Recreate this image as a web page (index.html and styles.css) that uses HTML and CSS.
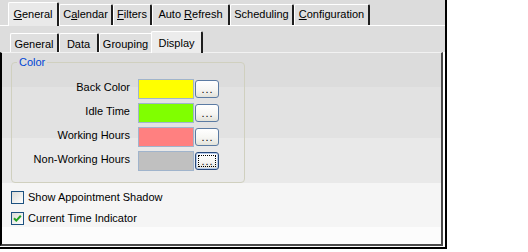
FILE: index.html
```html
<!DOCTYPE html>
<html>
<head>
<meta charset="utf-8">
<link rel="stylesheet" href="styles.css">
</head>
<body>
<div class="dialog">
  <div class="tabrow top-row">
    <div class="tab sel w-general"><u>G</u>eneral</div>
    <div class="tab w-calendar">C<u>a</u>lendar</div>
    <div class="tab w-filters"><u>F</u>ilters</div>
    <div class="tab w-auto">Auto <u>R</u>efresh</div>
    <div class="tab w-sched">Schedulin<u>g</u></div>
    <div class="tab w-config"><u>C</u>onfiguration</div>
  </div>
  <div class="page">
    <div class="tabrow sub-row">
      <div class="tab w-sgeneral">General</div>
      <div class="tab w-data">Data</div>
      <div class="tab w-grouping">Grouping</div>
      <div class="tab sel w-display">Display</div>
    </div>
    <div class="inner-wrap">
      <div class="inner">
        <fieldset class="group">
          <legend>Color</legend>
          <div class="color-grid">
            <span class="lbl">Back Color</span><span class="swatch sw-back"></span><button class="pick">...</button>
            <span class="lbl">Idle Time</span><span class="swatch sw-idle"></span><button class="pick">...</button>
            <span class="lbl">Working Hours</span><span class="swatch sw-work"></span><button class="pick">...</button>
            <span class="lbl">Non-Working Hours</span><span class="swatch sw-nonwork"></span><button class="pick focus">...</button>
          </div>
        </fieldset>
        <div class="checks">
          <label class="check"><span class="box"></span>Show Appointment Shadow</label>
          <label class="check"><span class="box"><svg width="11" height="11" viewBox="0 0 11 11"><path d="M2 5.2 L4.3 7.6 L8.8 2.8" stroke="#21a121" stroke-width="2" fill="none"/></svg></span>Current Time Indicator</label>
        </div>
      </div>
    </div>
  </div>
</div>
</body>
</html>
```

FILE: styles.css
```css
* { box-sizing: border-box; }

body {
  margin: 0;
  background: #fff;
  font: 11px/13px "Liberation Sans", Arial, sans-serif;
  color: #000;
}

.dialog {
  width: 447px;
  height: 249px;
  background: #dcdcdc;
  border-right: 2px solid #000;
  border-bottom: 2px solid #000;
  display: flex;
  flex-direction: column;
}

.tabrow {
  display: flex;
  align-items: flex-end;
  padding-left: 10px;
  flex: none;
}

.top-row { height: 25px; }

.tab {
  flex: none;
  height: 21px;
  background: #dfdfdf;
  border-top: 1px solid #fff;
  border-left: 1px solid #fff;
  border-right: 2px solid #1e1e1e;
  border-top-left-radius: 2px;
  border-top-right-radius: 2px;
  text-align: center;
  line-height: 19px;
  white-space: nowrap;
}

.tab.sel {
  position: relative;
  margin-left: -2px;
  margin-bottom: -1px;
  height: 24px;
  line-height: 23px;
  background: #e9e9e9;
}

.w-general { width: 51px; }
.w-calendar { width: 54px; }
.w-filters { width: 39px; }
.w-auto { width: 78px; }
.w-sched { width: 64px; }
.w-config { width: 76px; }

.page {
  flex: 1;
  display: flex;
  flex-direction: column;
  background: #dddddd;
  border-top: 1px solid #fff;
  padding-top: 7px;
}

.sub-row { height: 19px; }

.sub-row .tab {
  height: 19px;
  line-height: 16px;
  padding-top: 2px;
}

.sub-row .tab.sel {
  height: 22px;
  line-height: 19px;
  padding-top: 2px;
  background: #ececec;
}

.w-sgeneral { width: 49px; }
.w-data { width: 40px; }
.w-grouping { width: 54px; }
.w-display { width: 52px; }

.inner-wrap {
  flex: 1;
  display: flex;
  border-right: 2px solid #fff;
  border-bottom: 1px solid #fff;
}

.inner {
  flex: 1;
  border-top: 1px solid #f2f2f2;
  border-left: 2px solid #000;
  border-right: 2px solid #4a4a4a;
  border-bottom: 2px solid #4a4a4a;
  background: linear-gradient(to bottom,
    #dcdcdc 0, #dcdcdc 34px,
    #e2e2e2 34px, #e2e2e2 85px,
    #e9e9e9 85px, #e9e9e9 130px,
    #f5f5f5 130px, #f5f5f5 174px,
    #fcfcfc 174px);
}

.group {
  margin: 3px 0 0 9px;
  width: 234px;
  min-inline-size: 0;
  padding: 10px 0 11px 5px;
  border: 1px solid #d0d0bf;
  border-radius: 4px;
}

.group legend {
  padding: 0 2px;
  color: #0046d5;
  line-height: 13px;
}

.color-grid {
  display: grid;
  grid-template-columns: 121px 56px 25px;
  grid-auto-rows: 20px;
  row-gap: 4px;
  align-items: center;
}

.lbl {
  align-self: start;
  padding-top: 2px;
  padding-right: 8px;
  text-align: right;
  white-space: nowrap;
}

.swatch {
  display: block;
  width: 56px;
  height: 20px;
  border: 1px solid #a0b4cc;
}

.sw-back { background: #ffff00; }
.sw-idle { background: #80ff00; }
.sw-work { background: #ff8080; }
.sw-nonwork { background: #c0c0c0; }

.pick {
  margin: 0 0 0 1px;
  width: 24px;
  height: 18px;
  padding: 0;
  font: 11px/13px "Liberation Sans", Arial, sans-serif;
  letter-spacing: 1px;
  text-indent: 1px;
  color: #000;
  border: 1px solid #5b7ba3;
  border-radius: 3px;
  background: linear-gradient(to bottom, #ffffff, #f6f6f3 55%, #e2e2da);
}

.pick.focus {
  border-color: #2a4a7a;
  box-shadow: inset 0 0 0 1px #b7cdee;
  outline: 1px dotted #000;
  outline-offset: -4px;
}

.checks {
  margin: 8px 0 0 9px;
  display: flex;
  flex-direction: column;
  row-gap: 8px;
}

.check {
  display: flex;
  align-items: center;
  column-gap: 4px;
  height: 13px;
  white-space: nowrap;
}

.box {
  flex: none;
  width: 13px;
  height: 13px;
  border: 1px solid #1c5180;
  background: linear-gradient(135deg, #dcdcd7, #ffffff);
  display: flex;
}
```
